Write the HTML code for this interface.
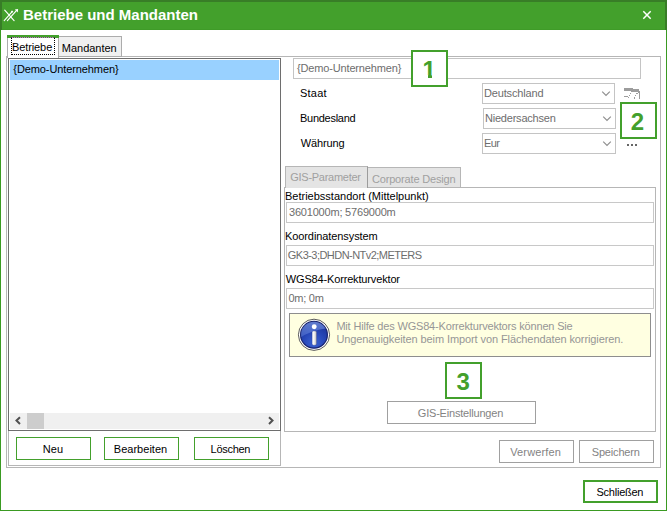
<!DOCTYPE html>
<html lang="de"><head><meta charset="utf-8"><title>Betriebe und Mandanten</title>
<style>
html,body{margin:0;padding:0;background:#fff;}
body{width:667px;height:511px;position:relative;overflow:hidden;font-family:"Liberation Sans",sans-serif;font-size:11px;}
div,span,svg,button,label,section,header,ul,li,p{position:absolute;box-sizing:border-box;margin:0;padding:0;}
ul{list-style:none;}
.t{white-space:nowrap;line-height:1;font-size:11px;}
.grp{left:0;top:0;width:0;height:0;}
.btn{appearance:none;-webkit-appearance:none;background:#fff;font:inherit;border-radius:0;overflow:visible;text-align:left;cursor:default;}
.edit,.combo{background:#fff;}
</style></head><body>
<div class="grp window">
<div class="client" style="left:0px;top:0px;width:667px;height:511px;background:#fff;"></div>
<header class="grp titlebar">
<div style="left:0px;top:0px;width:667px;height:30px;background:#43a02c;"></div>
<div style="left:0px;top:29px;width:667px;height:1px;background:#3f9b28;"></div>
<div style="left:0px;top:0px;width:667px;height:2px;background:#387d27;"></div>
<div style="left:0px;top:0px;width:2px;height:30px;background:#387d27;"></div>
<div style="left:665px;top:0px;width:2px;height:30px;background:#387d27;"></div>
<svg class="appicon" style="left:0;top:0" width="24" height="30" viewBox="0 0 24 30"><g stroke="#fff" stroke-width="1.15" fill="none" stroke-linecap="round"><path d="M4.7 10.2 L14.1 20.6"/><path d="M4.2 20.6 L12.4 11.4"/><path d="M7.4 20.6 L16.6 10.3"/></g><path d="M14.8 9.4 L18.1 8.9 L17.8 12.4 Z" fill="#fff"/><path d="M11.1 10.7 L13.4 10.9 L12.5 12.8 L10.9 12.5 Z" fill="#fff" fill-opacity="0.85"/></svg>
<span class="t" style="left:23.00px;top:7.30px;color:#fff;letter-spacing:0.000px;font-size:15px;font-weight:bold;">Betriebe und Mandanten</span>
<svg class="close" style="left:640px;top:8px" width="14" height="14" viewBox="0 0 14 14"><path d="M3.3 3.3 L10.7 10.7 M10.7 3.3 L3.3 10.7" stroke="#fff" stroke-width="1.5" fill="none"/></svg>
</header>
<div style="left:0px;top:30px;width:1px;height:481px;background:#3a9a22;"></div>
<div style="left:666px;top:30px;width:1px;height:481px;background:#3a9a22;"></div>
<div style="left:0px;top:510px;width:667px;height:1px;background:#3a9a22;"></div>
<section class="grp maintabs">
<div class="tabpane" style="left:6px;top:56px;width:655px;height:412px;border:1px solid #b6b6b6;"></div>
<div class="tab" style="left:58px;top:36px;width:64px;height:21px;background:#f0f0f0;border:1px solid #acacac;"><span class="t" style="left:2.82px;top:5.69px;color:#000;letter-spacing:-0.020px;">Mandanten</span></div>
<div class="tab active" style="left:7px;top:35px;width:52px;height:23px;background:#fff;border:1px solid #acacac;border-bottom:none;"><div style="left:-1px;top:-1px;width:52px;height:3px;background:#43a02c;"></div><div class="focus" style="left:3px;top:1px;width:44px;height:18px;border:1px dotted #000;border-top-color:#c65fd6;"></div><span class="t" style="left:3.89px;top:5.69px;color:#000;letter-spacing:-0.082px;">Betriebe</span></div>
</section>
<section class="grp leftpanel">
<div style="left:8px;top:58px;width:273px;height:408px;border:1px solid #b6b6b6;"></div>
<ul class="listbox" style="left:8px;top:58px;width:273px;height:373px;background:#fff;border:1px solid #6e6e6e;"><li class="sel" style="left:1px;top:1px;width:269px;height:20px;background:#99d1ff;"><span class="t" style="left:3.32px;top:3.69px;color:#000;letter-spacing:-0.102px;">{Demo-Unternehmen}</span></li><div class="hscroll" style="left:1px;top:354px;width:269px;height:16px;background:#f0f0f0;"><div class="thumb" style="left:17px;top:0;width:17px;height:16px;background:#cdcdcd;"></div><svg style="left:0;top:0" width="17" height="16" viewBox="0 0 17 16"><path d="M10 4.3 L6.5 7.6 L10 10.9" stroke="#505050" stroke-width="2" fill="none"/></svg><svg style="left:252px;top:0" width="17" height="16" viewBox="0 0 17 16"><path d="M7 4.3 L10.5 7.6 L7 10.9" stroke="#505050" stroke-width="2" fill="none"/></svg></div></ul>
<button type="button" class="btn" style="left:16px;top:437px;width:75px;height:23px;border:1px solid #43a02c;"><span class="t" style="left:25.80px;top:5.69px;color:#000;letter-spacing:0.127px;">Neu</span></button>
<button type="button" class="btn" style="left:104px;top:437px;width:75px;height:23px;border:1px solid #43a02c;"><span class="t" style="left:8.82px;top:5.69px;color:#000;letter-spacing:0.019px;">Bearbeiten</span></button>
<button type="button" class="btn" style="left:194px;top:437px;width:75px;height:23px;border:1px solid #43a02c;"><span class="t" style="left:15.57px;top:5.69px;color:#000;letter-spacing:-0.291px;">Löschen</span></button>
</section>
<section class="grp form">
<div class="edit" style="left:293px;top:58px;width:348px;height:21px;border:1px solid #c4c4c4;"><span class="t" style="left:2.96px;top:3.69px;color:#6d6d6d;letter-spacing:-0.151px;">{Demo-Unternehmen}</span></div>
<label class="t" style="left:300.00px;top:87.69px;color:#000;letter-spacing:0.214px;">Staat</label>
<label class="t" style="left:300.00px;top:112.69px;color:#000;letter-spacing:-0.271px;">Bundesland</label>
<label class="t" style="left:300.77px;top:137.69px;color:#000;letter-spacing:-0.138px;">Währung</label>
<div class="combo" style="left:482px;top:83px;width:133px;height:21px;border:1px solid #c4c4c4;"><span class="t" style="left:1.00px;top:3.69px;color:#6d6d6d;letter-spacing:-0.158px;">Deutschland</span><svg style="left:118px;top:6px" width="11" height="7" viewBox="0 0 11 7"><path d="M1.2 1.6 L5 5.4 L8.8 1.6" stroke="#8e8e8e" stroke-width="1.15" fill="none"/></svg></div>
<div class="combo" style="left:483px;top:108px;width:133px;height:21px;border:1px solid #c4c4c4;"><span class="t" style="left:1.00px;top:3.69px;color:#6d6d6d;letter-spacing:-0.215px;">Niedersachsen</span><svg style="left:118px;top:6px" width="11" height="7" viewBox="0 0 11 7"><path d="M1.2 1.6 L5 5.4 L8.8 1.6" stroke="#8e8e8e" stroke-width="1.15" fill="none"/></svg></div>
<div class="combo" style="left:482px;top:133px;width:134px;height:21px;border:1px solid #c4c4c4;"><span class="t" style="left:1.00px;top:3.69px;color:#6d6d6d;letter-spacing:-0.610px;">Eur</span><svg style="left:119px;top:6px" width="11" height="7" viewBox="0 0 11 7"><path d="M1.2 1.6 L5 5.4 L8.8 1.6" stroke="#8e8e8e" stroke-width="1.15" fill="none"/></svg></div>
<svg class="icobtn" style="left:620px;top:86px" width="24" height="16" viewBox="620 86 24 16" shape-rendering="crispEdges"><g fill="#9c9c9c"><rect x="624" y="88" width="9" height="3"/><rect x="631" y="89" width="8" height="3"/><rect x="639" y="91" width="1" height="8"/><rect x="638" y="91" width="1" height="2"/><rect x="636" y="93" width="2" height="1"/><rect x="630" y="93" width="1" height="1"/><rect x="629" y="95" width="1" height="1"/><rect x="635" y="95" width="1" height="1"/><rect x="634" y="97" width="1" height="2"/><rect x="624" y="96" width="4" height="1"/><rect x="628" y="97" width="1" height="1"/></g></svg>
<div class="grp more"><div style="left:627px;top:144px;width:2px;height:2px;background:#666;"></div><div style="left:631px;top:144px;width:2px;height:2px;background:#666;"></div><div style="left:635px;top:144px;width:2px;height:2px;background:#666;"></div></div>
<section class="grp gistabs">
<div class="tabpane" style="left:284px;top:187px;width:372px;height:245px;border:1px solid #b6b6b6;"></div>
<div class="tab disabled" style="left:367px;top:167px;width:94px;height:21px;background:#e4e4e4;border:1px solid #b6b6b6;"><span class="t" style="left:3.91px;top:5.69px;color:#a0a0a0;letter-spacing:-0.162px;">Corporate Design</span></div>
<div class="tab active disabled" style="left:285px;top:166px;width:83px;height:22px;background:#e4e4e4;border:1px solid #b6b6b6;border-bottom:none;border-right-color:#9c9c9c;"><span class="t" style="left:4.31px;top:4.69px;color:#a0a0a0;letter-spacing:-0.279px;">GIS-Parameter</span></div>
<label class="t" style="left:285.00px;top:190.69px;color:#000;letter-spacing:0.000px;">Betriebsstandort (Mittelpunkt)</label>
<div class="edit" style="left:286px;top:202px;width:368px;height:21px;border:1px solid #c8c8c8;"><span class="t" style="left:2.03px;top:3.69px;color:#6d6d6d;letter-spacing:-0.199px;">3601000m; 5769000m</span></div>
<label class="t" style="left:285.00px;top:230.69px;color:#000;letter-spacing:-0.092px;">Koordinatensystem</label>
<div class="edit" style="left:286px;top:245px;width:368px;height:21px;border:1px solid #c8c8c8;"><span class="t" style="left:0.82px;top:3.69px;color:#6d6d6d;letter-spacing:-0.537px;">GK3-3;DHDN-NTv2;METERS</span></div>
<label class="t" style="left:285.77px;top:273.69px;color:#000;letter-spacing:-0.156px;">WGS84-Korrekturvektor</label>
<div class="edit" style="left:286px;top:288px;width:368px;height:21px;border:1px solid #c8c8c8;"><span class="t" style="left:1.46px;top:3.69px;color:#6d6d6d;letter-spacing:-0.247px;">0m; 0m</span></div>
<div class="infobox" style="left:289px;top:313px;width:362px;height:44px;background:#ffffe1;border:1px solid #8e8e8e;"><svg style="left:6px;top:3px" width="36" height="36" viewBox="296 317 36 36">
<defs><radialGradient id="ig" cx="0.5" cy="0.8" r="0.8"><stop offset="0" stop-color="#3a62d4"/><stop offset="0.55" stop-color="#2544b4"/><stop offset="1" stop-color="#1c3296"/></radialGradient>
<linearGradient id="ih" x1="0" y1="0" x2="0" y2="1"><stop offset="0" stop-color="#9fc0ff" stop-opacity="0.62"/><stop offset="1" stop-color="#7fa0f0" stop-opacity="0.22"/></linearGradient>
<linearGradient id="ii" x1="0" y1="0" x2="1" y2="0"><stop offset="0" stop-color="#ffffff"/><stop offset="0.45" stop-color="#f4f4f4"/><stop offset="1" stop-color="#b4b4b4"/></linearGradient>
<clipPath id="ic"><circle cx="314" cy="334.8" r="13.1"/></clipPath></defs>
<circle cx="314" cy="334.8" r="15.6" fill="#ffffff" stroke="#5c5c5c" stroke-width="1"/>
<circle cx="314" cy="334.8" r="13.4" fill="url(#ig)" stroke="#182470" stroke-width="1.2"/>
<path d="M297 341 Q304 331.5 331 327.5 L331 317 L297 317 Z" fill="url(#ih)" clip-path="url(#ic)"/>
<circle cx="314.2" cy="326.7" r="2.45" fill="#fff"/>
<rect x="312.1" y="331" width="4.5" height="14.2" rx="1.4" fill="url(#ii)" stroke="#1f2f80" stroke-opacity="0.55" stroke-width="0.6"/>
</svg><p class="t" style="left:46.38px;top:6.69px;color:#969696;letter-spacing:-0.179px;">Mit Hilfe des WGS84-Korrekturvektors können Sie</p><p class="t" style="left:46.40px;top:19.69px;color:#969696;letter-spacing:-0.094px;">Ungenauigkeiten beim Import von Flächendaten korrigieren.</p></div>
<button type="button" class="btn" disabled style="left:387px;top:401px;width:149px;height:23px;border:1px solid #a0a0a0;"><span class="t" style="left:29.80px;top:5.69px;color:#838383;letter-spacing:-0.200px;">GIS-Einstellungen</span></button>
</section>
<button type="button" class="btn" disabled style="left:499px;top:440px;width:75px;height:23px;border:1px solid #a0a0a0;"><span class="t" style="left:10.26px;top:5.69px;color:#838383;letter-spacing:0.131px;">Verwerfen</span></button>
<button type="button" class="btn" disabled style="left:579px;top:440px;width:75px;height:23px;border:1px solid #a0a0a0;"><span class="t" style="left:11.74px;top:5.69px;color:#838383;letter-spacing:-0.172px;">Speichern</span></button>
</section>
<div class="callout" style="left:411px;top:50px;width:37px;height:37px;background:#fff;border:2px solid #43a02c;"><span class="t" style="left:9.60px;top:5.68px;color:#43a02c;letter-spacing:0.000px;font-size:24px;font-weight:bold;">1</span><div style="left:8px;top:23px;width:7px;height:3.5px;background:#fff;"></div><div style="left:19px;top:23px;width:6px;height:3.5px;background:#fff;"></div></div>
<div class="callout" style="left:620px;top:102px;width:37px;height:37px;background:#fff;border:2px solid #43a02c;"><span class="t" style="left:8.87px;top:5.68px;color:#43a02c;letter-spacing:0.000px;font-size:24px;font-weight:bold;">2</span></div>
<div class="callout" style="left:445px;top:362px;width:37px;height:37px;background:#fff;border:2px solid #43a02c;"><span class="t" style="left:9.47px;top:5.68px;color:#43a02c;letter-spacing:0.000px;font-size:24px;font-weight:bold;">3</span></div>
<button type="button" class="btn" style="left:583px;top:480px;width:75px;height:23px;border:2px solid #43a02c;"><span class="t" style="left:11.52px;top:4.69px;color:#000;letter-spacing:-0.246px;">Schließen</span></button>
</div>
</body></html>
